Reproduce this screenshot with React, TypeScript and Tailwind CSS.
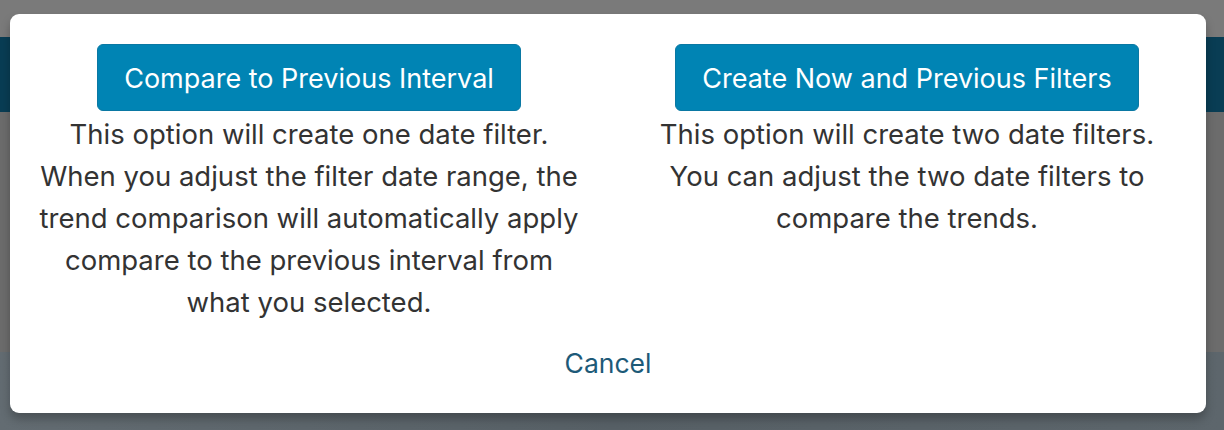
import React from "react";

export default function App() {
  return (
    <div className="relative w-[1224px] h-[430px] overflow-hidden" style={{ fontFamily: "Inter, 'Noto Sans', sans-serif" }}>
      {/* dimmed background page */}
      <div className="flex flex-col h-full">
        <div className="h-[37px] bg-[#7a7a7a]" />
        <div className="h-[75px] bg-[#093d54]" />
        <div className="h-[240px] bg-[#6c6c6c]" />
        <div className="flex-1 bg-gradient-to-r from-[#636c72] via-[#576066] to-[#5d666c]" />
      </div>

      {/* modal */}
      <div className="absolute left-[10px] top-[14px] w-[1196px] h-[399px] bg-white rounded-[9px] shadow-[0_6px_10px_rgba(0,0,0,0.25)] flex flex-col pt-[30px]">
        <div className="grid grid-cols-2">
          <div className="flex flex-col items-center">
            <button className="h-[67px] px-[26px] pt-[3px] rounded-[6px] bg-[#0084b4] border border-[#0a78a3] text-white text-[27px]">
              Compare to Previous Interval
            </button>
            <p className="mt-[2px] text-center text-[#333333] text-[27.5px] leading-[42px] whitespace-nowrap">
              This option will create one date filter.<br />
              When you adjust the filter date range, the<br />
              trend comparison will automatically apply<br />
              compare to the previous interval from<br />
              what you selected.
            </p>
          </div>
          <div className="flex flex-col items-center">
            <button className="h-[67px] px-[26px] pt-[3px] rounded-[6px] bg-[#0084b4] border border-[#0a78a3] text-white text-[27px]">
              Create Now and Previous Filters
            </button>
            <p className="mt-[2px] text-center text-[#333333] text-[27.5px] leading-[42px] whitespace-nowrap">
              This option will create two date filters.<br />
              You can adjust the two date filters to<br />
              compare the trends.
            </p>
          </div>
        </div>
        <div className="mt-[19px] flex justify-center">
          <span className="text-[#1d5a78] text-[26.5px] leading-[42px]">Cancel</span>
        </div>
      </div>
    </div>
  );
}
